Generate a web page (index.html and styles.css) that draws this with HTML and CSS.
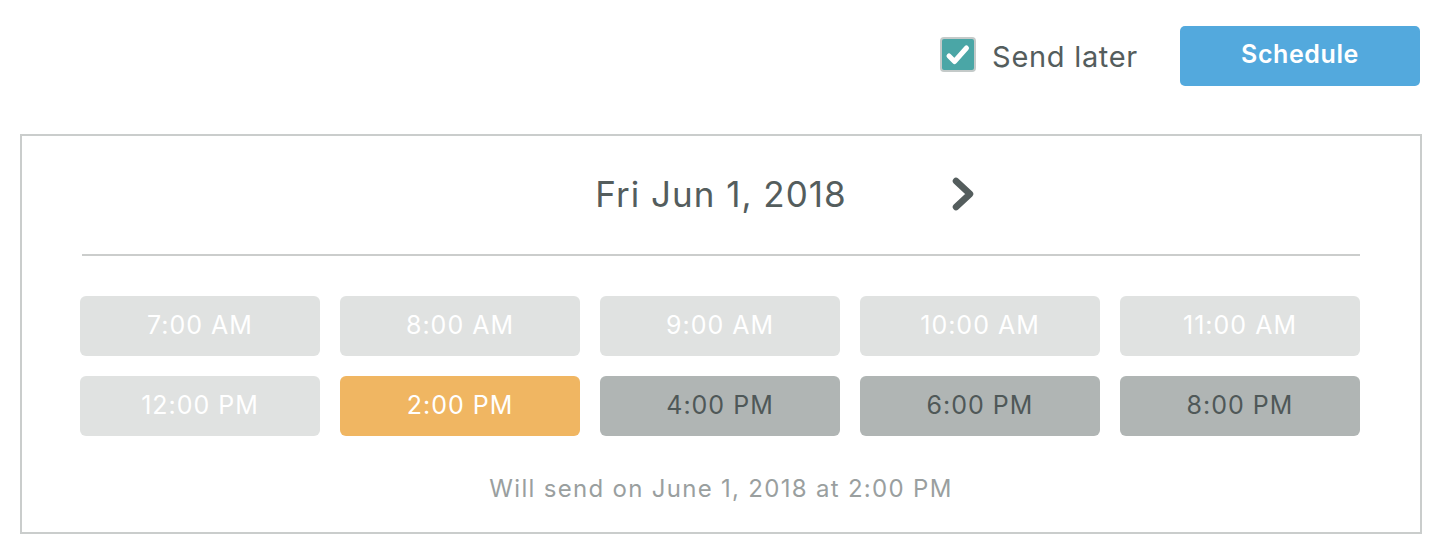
FILE: index.html
```html
<!DOCTYPE html>
<html>
<head>
<meta charset="utf-8">
<link rel="stylesheet" href="styles.css">
</head>
<body>
<div class="topbar">
  <label class="send-later">
    <span class="checkbox">
      <svg width="32" height="31" viewBox="0 0 32 31"><path d="M7 17 L12.5 22.5 L24.5 9" fill="none" stroke="#fff" stroke-width="5" stroke-linecap="round" stroke-linejoin="round"/></svg>
    </span>
    <span class="send-label">Send later</span>
  </label>
  <button class="schedule-btn">Schedule</button>
</div>
<div class="panel">
  <div class="date-row">
    <span class="chev hidden"><svg width="24" height="34" viewBox="0 0 24 34"><path d="M19 4 L5 17 L19 30" fill="none" stroke="#545d5d" stroke-width="6.5" stroke-linecap="round" stroke-linejoin="round"/></svg></span>
    <span class="date">Fri Jun 1, 2018</span>
    <span class="chev"><svg width="24" height="34" viewBox="0 0 24 34"><path d="M5 4 L19 17 L5 30" fill="none" stroke="#545d5d" stroke-width="6.5" stroke-linecap="round" stroke-linejoin="round"/></svg></span>
  </div>
  <div class="divider"></div>
  <div class="slots">
    <div class="slot disabled">7:00 AM</div>
    <div class="slot disabled">8:00 AM</div>
    <div class="slot disabled">9:00 AM</div>
    <div class="slot disabled">10:00 AM</div>
    <div class="slot disabled">11:00 AM</div>
    <div class="slot disabled">12:00 PM</div>
    <div class="slot selected">2:00 PM</div>
    <div class="slot available">4:00 PM</div>
    <div class="slot available">6:00 PM</div>
    <div class="slot available">8:00 PM</div>
  </div>
  <div class="summary">Will send on June 1, 2018 at 2:00 PM</div>
</div>
</body>
</html>
```

FILE: styles.css
```css
* { box-sizing: border-box; }
body {
  margin: 0;
  background: #fff;
  font-family: Inter, "Open Sans", sans-serif;
  color: #545d5d;
}
.topbar {
  display: flex;
  justify-content: flex-end;
  align-items: flex-start;
  padding: 26px 22px 0 0;
  height: 134px;
}
.send-later {
  display: flex;
  align-items: center;
  height: 60px;
  margin-right: 42px;
}
.checkbox {
  width: 36px;
  height: 35px;
  border-radius: 4px;
  background: #4aa6a6;
  border: 2px solid #c4cac9;
  display: flex;
  align-items: center;
  justify-content: center;
  margin-right: 16px;
  margin-top: -3px;
}
.send-label {
  font-size: 29px;
  color: #545d5d;
  letter-spacing: 0.7px;
}
.schedule-btn {
  width: 240px;
  height: 60px;
  border: none;
  border-radius: 5px;
  background: #53a9dd;
  color: #fff;
  font-family: inherit;
  font-size: 25px;
  font-weight: 600;
  padding-bottom: 5px;
  letter-spacing: 0.6px;
}
.panel {
  margin: 0 20px;
  border: 2px solid #cacdcc;
  height: 400px;
  padding: 0 60px;
}
.date-row {
  display: flex;
  justify-content: center;
  align-items: center;
  gap: 104px;
  height: 118px;
  padding-bottom: 2px;
}
.date {
  font-size: 35px;
  color: #545d5d;
  letter-spacing: 1px;
}
.chev { display: flex; margin-top: 0; }
.hidden { visibility: hidden; }
.divider {
  height: 2px;
  background: #cbcdcc;
}
.slots {
  display: grid;
  grid-template-columns: repeat(5, 240px);
  gap: 20px;
  margin: 40px -2px 0;
}
.slot {
  height: 60px;
  border-radius: 6px;
  display: flex;
  align-items: center;
  justify-content: center;
  font-size: 25px;
  letter-spacing: 1px;
  padding-bottom: 2px;
}
.disabled { background: #e0e2e1; color: #fff; }
.selected { background: #f0b662; color: #fff; }
.available { background: #b0b5b4; color: #4f5858; }
.summary {
  text-align: center;
  font-size: 24px;
  color: #9a9f9f;
  margin-top: 38px;
  letter-spacing: 1.3px;
}
```
